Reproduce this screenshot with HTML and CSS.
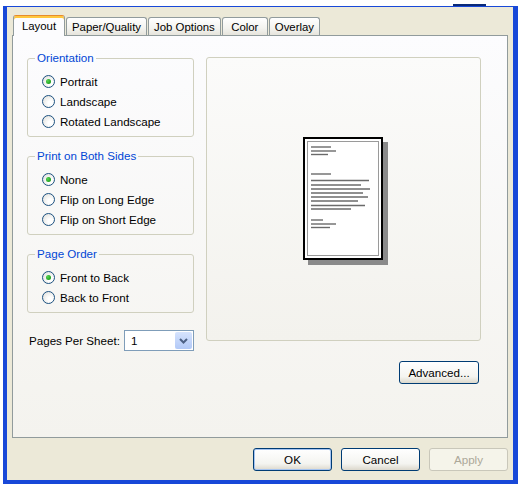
FILE: index.html
```
<!doctype html>
<html lang="en">
<head>
<meta charset="utf-8">
<title>Printing Preferences - Layout</title>
<link rel="stylesheet" href="styles.css">
</head>
<body>

<div class="topstrip"><span class="titlebit"></span></div>

<div class="window">
  <div class="tabs">
    <div class="tab active">Layout</div>
    <div class="tab">Paper/Quality</div>
    <div class="tab">Job Options</div>
    <div class="tab">Color</div>
    <div class="tab">Overlay</div>
  </div>

  <div class="panel">
    <div class="leftcol">
      <fieldset class="group">
        <legend>Orientation</legend>
        <div class="radio"><span class="circle checked"></span>Portrait</div>
        <div class="radio"><span class="circle"></span>Landscape</div>
        <div class="radio"><span class="circle"></span>Rotated Landscape</div>
      </fieldset>

      <fieldset class="group">
        <legend>Print on Both Sides</legend>
        <div class="radio"><span class="circle checked"></span>None</div>
        <div class="radio"><span class="circle"></span>Flip on Long Edge</div>
        <div class="radio"><span class="circle"></span>Flip on Short Edge</div>
      </fieldset>

      <fieldset class="group">
        <legend>Page Order</legend>
        <div class="radio"><span class="circle checked"></span>Front to Back</div>
        <div class="radio"><span class="circle"></span>Back to Front</div>
      </fieldset>

      <div class="pps">
        <span class="ppslabel">Pages Per Sheet:</span>
        <div class="select">
          <span class="value">1</span>
          <span class="drop">
            <svg width="9" height="6" viewBox="0 0 9 6"><path d="M1 1 L4.5 4.5 L8 1" fill="none" stroke="#4d6185" stroke-width="2"/></svg>
          </span>
        </div>
      </div>
    </div>

    <div class="rightcol">
      <div class="preview">
        <svg width="85" height="128" viewBox="0 0 85 128">
          <rect x="5" y="5" width="80" height="123" fill="#8a8a8a"/>
          <rect x="1" y="1" width="78" height="121" fill="#fff" stroke="#000" stroke-width="2"/>
          <rect x="4.5" y="4.5" width="71" height="114" fill="none" stroke="#9a9a9a" stroke-width="1"/>
          <g stroke="#6a6a6a" stroke-width="1.4">
            <line x1="8" y1="10" x2="28" y2="10"/>
            <line x1="8" y1="14" x2="33" y2="14"/>
            <line x1="8" y1="17.5" x2="25" y2="17.5"/>
            <line x1="8" y1="37" x2="28" y2="37"/>
            <line x1="8" y1="43.5" x2="66" y2="43.5"/>
            <line x1="8" y1="48" x2="58" y2="48"/>
            <line x1="8" y1="52" x2="67" y2="52"/>
            <line x1="8" y1="56" x2="60" y2="56"/>
            <line x1="8" y1="60" x2="65" y2="60"/>
            <line x1="8" y1="64" x2="55" y2="64"/>
            <line x1="8" y1="68.5" x2="62" y2="68.5"/>
            <line x1="8" y1="72" x2="48" y2="72"/>
            <line x1="8" y1="83" x2="20" y2="83"/>
            <line x1="8" y1="87" x2="33" y2="87"/>
            <line x1="8" y1="90.5" x2="27" y2="90.5"/>
          </g>
        </svg>
      </div>
      <div class="advrow">
        <button class="btn">Advanced...</button>
      </div>
    </div>
  </div>

  <div class="buttons">
    <button class="btn default">OK</button>
    <button class="btn">Cancel</button>
    <button class="btn" disabled>Apply</button>
  </div>
</div>

</body>
</html>
```

FILE: styles.css
```
* {
  box-sizing: border-box;
}
body {
  margin: 0;
  background: #fff;
  font-family: "Liberation Sans", Arial, sans-serif;
  font-size: 11.6px;
  color: #000;
}
.topstrip {
  height: 6px;
  padding: 4px 0 0 453px;
}
.titlebit {
  display: block;
  width: 33px;
  height: 2px;
  background: #0a2a78;
}
.window {
  margin-left: 3px;
  width: 515px;
  height: 478px;
  background: #ece9d8;
  border: solid #1848d8;
  border-width: 1px 5px 4px 4px;
}
.tabs {
  display: flex;
  align-items: flex-end;
  height: 28px;
  padding: 8px 0 0 6px;
  position: relative;
  z-index: 1;
}
.tab {
  height: 18px;
  line-height: 18px;
  min-width: 46px;
  padding: 0 5px;
  margin-right: 1px;
  border: 1px solid #919b9c;
  border-bottom: none;
  border-radius: 3px 3px 0 0;
  background: linear-gradient(#ffffff, #f3f3ef 60%, #e6e4dc);
  text-align: center;
  font-size: 11.4px;
  white-space: nowrap;
}
.tab.active {
  width: 52px;
  height: 21px;
  line-height: 20px;
  margin-bottom: -1px;
  padding: 0;
  border-top: 1px solid #e68b2c;
  box-shadow: inset 0 2px #ffc73c;
  background: #fcfcfe;
}
.panel {
  margin: 0 5px;
  height: 403px;
  border: 1px solid #919b9c;
  background: linear-gradient(#fcfcfe, #f4f3ee);
  display: flex;
  gap: 12px;
  padding: 15px 0 0 14px;
}
.leftcol {
  width: 167px;
}
.group {
  margin: 0 0 12px;
  padding: 6px 0 5px 14px;
  border: 1px solid #d0d0bf;
  border-radius: 3px;
}
.group legend {
  margin-left: -7px;
  padding: 0 2px;
  line-height: 14px;
  color: #0046d5;
}
.radio {
  display: flex;
  align-items: center;
  height: 20px;
  gap: 5px;
  white-space: nowrap;
}
.circle {
  width: 13px;
  height: 13px;
  border-radius: 50%;
  border: 1px solid #1c5180;
  background: radial-gradient(circle at 65% 65%, #ffffff 20%, #dcdcd7 100%);
  display: flex;
  align-items: center;
  justify-content: center;
}
.circle.checked::after {
  content: "";
  width: 5px;
  height: 5px;
  border-radius: 50%;
  background: radial-gradient(circle at 35% 35%, #55d551, #21a121 70%);
}
.pps {
  display: flex;
  align-items: center;
  justify-content: space-between;
  margin-top: 17px;
  padding-left: 2px;
}
.ppslabel {
  white-space: nowrap;
}
.select {
  flex: none;
  width: 70px;
  height: 21px;
  border: 1px solid #7f9db9;
  background: #fff;
  display: flex;
  align-items: center;
  padding: 1px;
}
.select .value {
  flex: 1;
  padding-left: 5px;
}
.select .drop {
  width: 17px;
  height: 17px;
  border-radius: 2px;
  background: linear-gradient(#d6e3fd, #b2c9f7);
  display: flex;
  align-items: center;
  justify-content: center;
}
.rightcol {
  width: 275px;
  padding-top: 6px;
}
.preview {
  height: 284px;
  border: 1px solid #d0d0bf;
  border-radius: 3px;
  background: linear-gradient(#fbfbfa, #f3f2ed);
  display: flex;
  align-items: center;
  justify-content: center;
  padding-top: 3px;
  padding-left: 4px;
}
.advrow {
  display: flex;
  justify-content: flex-end;
  margin-top: 20px;
  padding-right: 2px;
}
.btn {
  width: 80px;
  height: 23px;
  font: inherit;
  color: #000;
  border: 1px solid #003c74;
  border-radius: 3px;
  background: linear-gradient(#ffffff, #f4f4f0 70%, #dcd8cc);
  padding: 0;
}
.btn.default {
  box-shadow: inset 0 0 0 1px #a6c4f0;
}
.btn:disabled {
  border-color: #c9c7ba;
  color: #aca899;
  background: #f5f4ea;
}
.buttons {
  display: flex;
  justify-content: flex-end;
  gap: 9px;
  margin-top: 10px;
  padding-right: 5px;
}
.buttons .btn {
  width: 79px;
}
```
